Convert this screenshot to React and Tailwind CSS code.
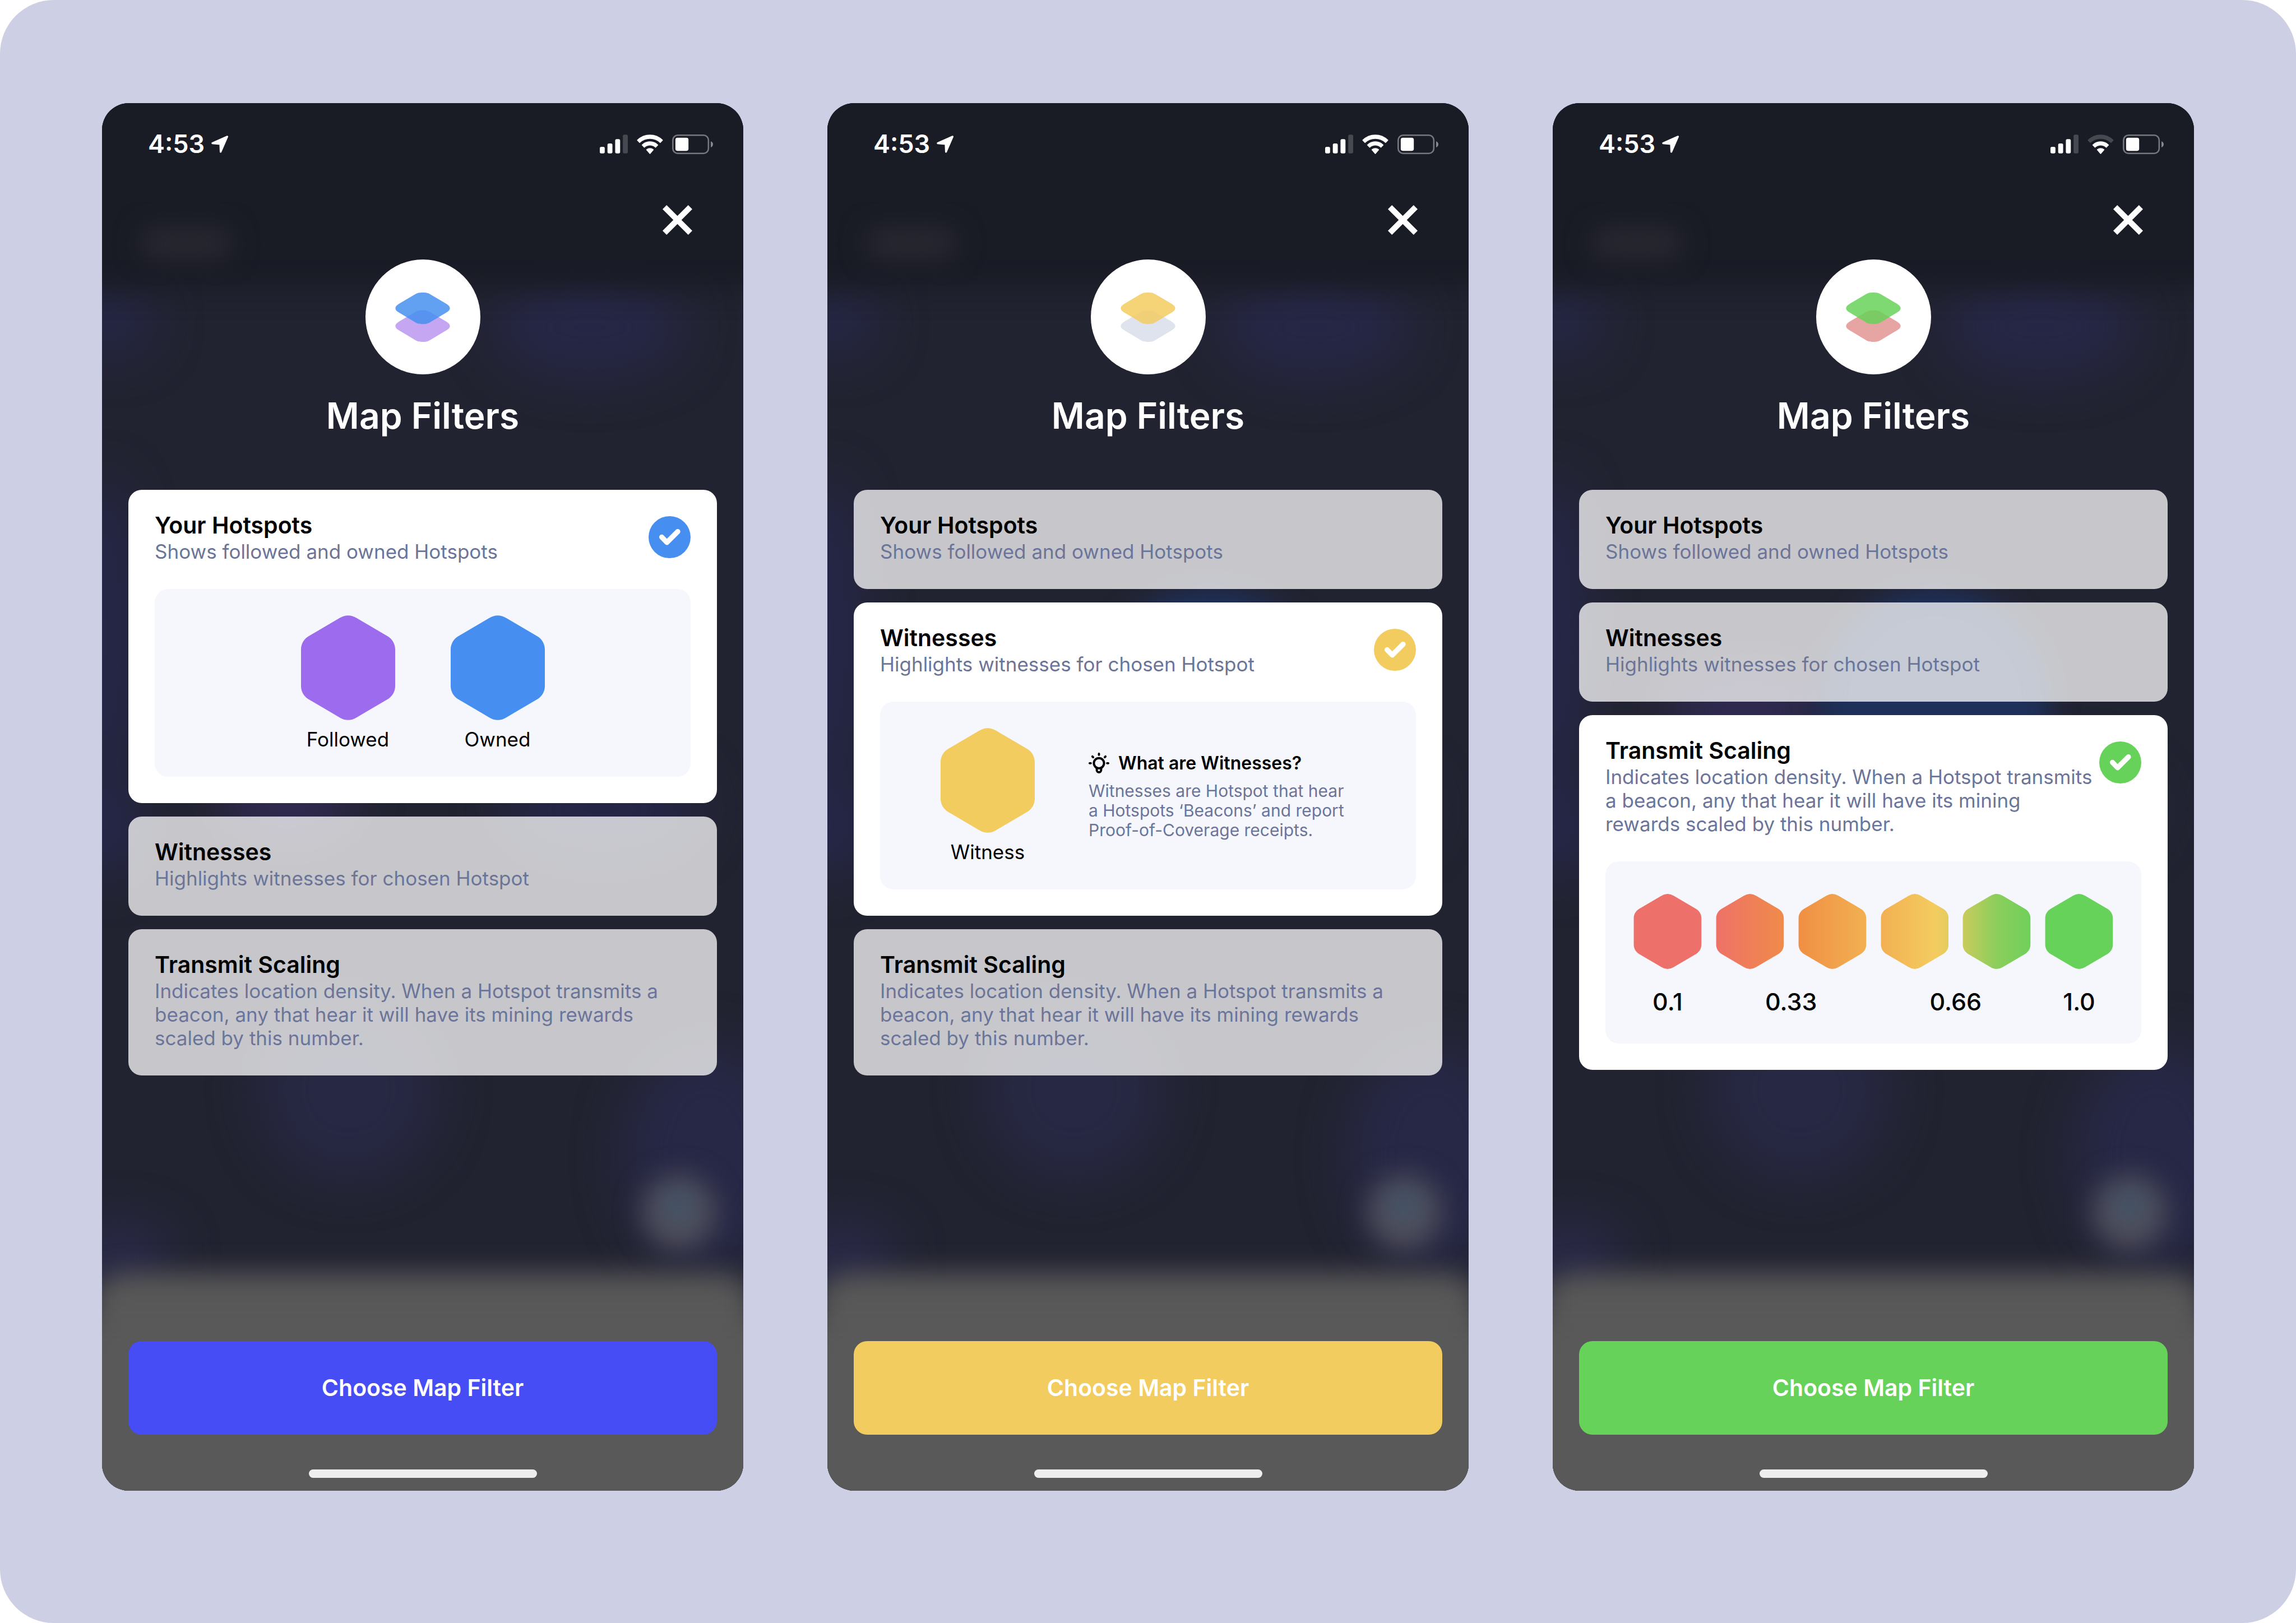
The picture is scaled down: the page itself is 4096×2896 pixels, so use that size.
import { useId } from "react";

const HEX_PATH =
  "M70 5Q86 -5 102 5L159 38.5C167 43.5 172 52.5 172 62V129C172 138.5 167 147.5 159 152.5L102 186Q86 196 70 186L13 152.5C5 147.5 0 138.5 0 129V62C0 52.5 5 43.5 13 38.5Z";

const DIAMOND_PATH =
  "M109 9C122 2 132 0 150 0S178 2 191 9L281 62C306 77 306 96 281 109L191 163C178 171 168 173 150 173S122 171 109 163L19 109C-6 96 -6 77 19 62Z";

const OPTIONS = [
  { id: "hotspots", title: "Your Hotspots", text: "Shows followed and owned Hotspots" },
  { id: "witnesses", title: "Witnesses", text: "Highlights witnesses for chosen Hotspot" },
  {
    id: "scaling",
    title: "Transmit Scaling",
    text: "Indicates location density. When a Hotspot transmits a beacon, any that hear it will have its mining rewards scaled by this number.",
  },
];

const SCREENS = [
  {
    selected: "hotspots",
    top: "#468ff0",
    bottom: "#c4a6f2",
    check: "#468ff0",
    button: "bg-[#474df5]",
    glow: false,
    weakWifi: false,
  },
  {
    selected: "witnesses",
    top: "#f3cc60",
    bottom: "#dfe3ee",
    check: "#f3cc60",
    button: "bg-[#f3cc60]",
    glow: true,
    weakWifi: false,
  },
  {
    selected: "scaling",
    top: "#67d259",
    bottom: "#e6a4a2",
    check: "#67d259",
    button: "bg-[#67d259]",
    glow: true,
    weakWifi: true,
  },
];

const SCALE = [
  [["0", "#ed716a"], ["1", "#ed716a"]],
  [["0", "#ee7268"], ["1", "#f08b4a"]],
  [["0", "#f08f44"], ["1", "#f2b052"]],
  [["0", "#f2b052"], ["0.8", "#f4cc60"], ["1", "#e3cc5e"]],
  [["0", "#c8cc5c"], ["0.5", "#8cce5c"], ["1", "#6fd05a"]],
  [["0", "#67d259"], ["1", "#67d259"]],
];

function Backdrop({ glow }) {
  const id = useId();
  const soft = `${id}-soft`;
  const wide = `${id}-wide`;
  return (
    <svg
      className="absolute inset-0 h-full w-full"
      viewBox="0 0 1144 2476"
      preserveAspectRatio="none"
      aria-hidden="true"
    >
      <defs>
        <filter id={soft} x="-100%" y="-100%" width="300%" height="300%" colorInterpolationFilters="sRGB">
          <feGaussianBlur stdDeviation="24" />
        </filter>
        <filter id={wide} x="-100%" y="-100%" width="300%" height="300%" colorInterpolationFilters="sRGB">
          <feGaussianBlur stdDeviation="42" />
        </filter>
      </defs>
      <rect width="1144" height="2476" fill="#222331" />
      <g filter={`url(#${wide})`}>
        <ellipse cx="870" cy="400" rx="170" ry="90" fill="#262746" />
        <ellipse cx="10" cy="390" rx="80" ry="60" fill="#252746" />
        <ellipse cx="0" cy="950" rx="60" ry="280" fill="#26274a" />
        <ellipse cx="0" cy="1290" rx="70" ry="90" fill="#26274a" />
        <ellipse cx="330" cy="1230" rx="120" ry="80" fill="#322a52" />
        <ellipse cx="890" cy="1260" rx="180" ry="90" fill="#252646" />
        <ellipse cx="440" cy="1760" rx="160" ry="160" fill="#272843" />
        <ellipse cx="1080" cy="1880" rx="150" ry="200" fill="#272846" />
        <ellipse cx="30" cy="2060" rx="90" ry="60" fill="#2a2a4a" />
        {glow && <ellipse cx="350" cy="1080" rx="150" ry="70" fill="#2f2a50" />}
      </g>
      <rect x="-80" y="-120" width="1304" height="450" fill="#191b25" filter={`url(#${soft})`} />
      <rect x="70" y="225" width="160" height="50" rx="20" fill="#2a2a32" filter={`url(#${soft})`} />
      {glow && <circle cx="682" cy="1070" r="205" fill="#1e3059" filter={`url(#${soft})`} />}
      <circle cx="1029" cy="1979" r="66" fill="#50505c" filter={`url(#${soft})`} />
      <circle cx="1029" cy="1966" r="18" fill="#2a587a" filter={`url(#${soft})`} />
      <rect x="-20" y="2088" width="1184" height="500" rx="60" fill="#595959" filter={`url(#${soft})`} />
      <rect x="-80" y="2180" width="1304" height="400" fill="#595959" filter={`url(#${soft})`} />
    </svg>
  );
}

function StatusBar({ weakWifi }) {
  return (
    <div className="flex items-center justify-between pt-[45px] pr-[54px] pl-[82px] text-white">
      <div className="flex items-center gap-3">
        <span className="text-[45px] leading-14 font-semibold">4:53</span>
        <svg className="h-[31px] w-[30px]" viewBox="0 0 92 94" aria-hidden="true">
          <path
            d="M87 5L6 41L49 45L51 88Z"
            fill="currentColor"
            stroke="currentColor"
            strokeWidth="10"
            strokeLinejoin="round"
          />
        </svg>
      </div>
      <div className="flex items-center gap-4">
        <svg className="h-[34px] w-[50px]" viewBox="0 0 153 102" fill="currentColor" aria-hidden="true">
          <rect y="66" width="27" height="36" rx="8" />
          <rect x="42" y="48" width="27" height="54" rx="8" />
          <rect x="84" y="24" width="27" height="78" rx="8" />
          <rect x="126" width="27" height="102" rx="8" fill="#474950" />
        </svg>
        <svg
          className="h-[35px] w-[47px]"
          viewBox="0 0 146 108"
          fill="currentColor"
          stroke="currentColor"
          strokeWidth="5"
          strokeLinejoin="round"
          aria-hidden="true"
        >
          <path
            d="M4 31A98 98 0 0 1 142 31L130 44A83 83 0 0 0 16 44Z"
            fill={weakWifi ? "#474950" : "currentColor"}
            stroke={weakWifi ? "#474950" : "currentColor"}
          />
          <path d="M30 58A61 61 0 0 1 116 58L104 70A46 46 0 0 0 42 70Z" />
          <path d="M55 84A27 27 0 0 1 91 84L73 105Z" />
        </svg>
        <svg className="h-[35px] w-[73px]" viewBox="0 0 225 108" aria-hidden="true">
          <rect x="4" y="4" width="196" height="100" rx="27" fill="none" stroke="#77787f" strokeWidth="8" />
          <rect x="18" y="18" width="72" height="72" rx="11" fill="white" />
          <path d="M213 37Q225 42 225 54T213 71Z" fill="#8a8b91" />
        </svg>
      </div>
    </div>
  );
}

function Hexagon({ color, stops, className }) {
  const id = useId();
  return (
    <svg className={className} viewBox="0 0 172 191" aria-hidden="true">
      {stops && (
        <linearGradient id={id}>
          {stops.map(([offset, stop]) => (
            <stop key={offset} offset={offset} stopColor={stop} />
          ))}
        </linearGradient>
      )}
      <path d={HEX_PATH} fill={stops ? `url(#${id})` : color} />
    </svg>
  );
}

function Legend({ color, label }) {
  return (
    <div className="flex flex-col items-center gap-[13px]">
      <Hexagon color={color} className="h-[187px] w-[168px]" />
      <span className="text-[35px] leading-[42px] text-black">{label}</span>
    </div>
  );
}

function HotspotDetail() {
  return (
    <div className="flex justify-center gap-[99px] rounded-3xl bg-[#f6f7fc] pt-[47px] pb-[46px]">
      <Legend color="#9d6bed" label="Followed" />
      <Legend color="#468ff0" label="Owned" />
    </div>
  );
}

function BulbIcon() {
  return (
    <svg
      className="size-[37px]"
      viewBox="0 0 114 114"
      fill="none"
      stroke="currentColor"
      strokeWidth="12"
      strokeLinecap="round"
      aria-hidden="true"
    >
      <circle cx="57" cy="58" r="28" />
      <path d="M45 86V96A12 12 0 0 0 69 96V86" />
      <path d="M57 6V12M6 58H12M102 58H108M21 21L25 25M93 21L89 25" />
    </svg>
  );
}

function WitnessDetail() {
  return (
    <div className="flex items-center gap-[96px] rounded-3xl bg-[#f6f7fc] pt-[47px] pr-[114px] pb-[46px] pl-[108px]">
      <Legend color="#f3cc60" label="Witness" />
      <div className="flex flex-1 flex-col gap-3">
        <h4 className="flex items-center gap-4 text-[32px] leading-10 font-semibold text-black">
          <BulbIcon />
          What are Witnesses?
        </h4>
        <p className="text-[30px] leading-[35px] text-[#6b7599]">
          Witnesses are Hotspot that hear a Hotspots ‘Beacons’ and report Proof-of-Coverage receipts.
        </p>
      </div>
    </div>
  );
}

function ScalingDetail() {
  return (
    <div className="flex flex-col gap-8 rounded-3xl bg-[#f6f7fc] px-[50px] pt-[58px] pb-[49px]">
      <div className="grid grid-cols-6 gap-[25px]">
        {SCALE.map((stops, i) => (
          <Hexagon key={i} stops={stops} className="h-[134px] w-full" />
        ))}
      </div>
      <div className="grid grid-cols-6 gap-[25px] text-center text-[43px] leading-[52px] font-medium text-black">
        <span>0.1</span>
        <span className="col-span-2">0.33</span>
        <span className="col-span-2">0.66</span>
        <span>1.0</span>
      </div>
    </div>
  );
}

const DETAILS = { hotspots: HotspotDetail, witnesses: WitnessDetail, scaling: ScalingDetail };

function Option({ option, group, selected, check }) {
  const Detail = DETAILS[option.id];
  return (
    <div className={selected ? "rounded-3xl bg-white px-[47px] pb-[47px]" : "rounded-3xl bg-white/75 px-[47px]"}>
      <label className="relative flex items-start justify-between pt-[39px] pb-[46px]">
        <input type="radio" name={group} defaultChecked={selected} className="sr-only" />
        <span className="flex flex-1 flex-col gap-[2px]">
          <span className="text-[41px] leading-12 font-semibold text-black">{option.title}</span>
          <span className="text-[35px] leading-[42px] text-[#6b7599]">{option.text}</span>
        </span>
        {selected && (
          <svg className="mt-2 size-[75px]" viewBox="0 0 229 229" aria-hidden="true">
            <circle cx="114.5" cy="114.5" r="114.5" fill={check} />
            <path
              d="M72 114L100 143L159 84"
              fill="none"
              stroke="white"
              strokeWidth="28"
              strokeLinecap="round"
              strokeLinejoin="round"
            />
          </svg>
        )}
      </label>
      {selected && <Detail />}
    </div>
  );
}

function Phone({ screen }) {
  const group = useId();
  return (
    <section className="relative flex flex-1 flex-col overflow-hidden rounded-[48px] bg-[#222331]">
      <Backdrop glow={screen.glow} />
      <div className="relative flex flex-1 flex-col">
        <StatusBar weakWifi={screen.weakWifi} />
        <button type="button" aria-label="Close" className="mt-[81px] mr-[91px] self-end">
          <svg className="size-[53px]" viewBox="0 0 162 162" stroke="white" strokeWidth="31" aria-hidden="true">
            <path d="M11 11L151 151M151 11L11 151" />
          </svg>
        </button>
        <div className="mt-11 flex size-[205px] items-center justify-center self-center rounded-full bg-white">
          <svg className="h-[88px] w-[98px]" viewBox="0 0 300 271" aria-hidden="true">
            <path d={DIAMOND_PATH} transform="translate(0 98)" fill={screen.bottom} />
            <path d={DIAMOND_PATH} fill={screen.top} fillOpacity="0.85" />
          </svg>
        </div>
        <h2 className="mt-[35px] text-center text-[64px] leading-[77px] font-semibold text-white">Map Filters</h2>
        <div className="mt-[94px] flex flex-col gap-6 px-[47px]">
          {OPTIONS.map((option) => (
            <Option
              key={option.id}
              option={option}
              group={group}
              selected={option.id === screen.selected}
              check={screen.check}
            />
          ))}
        </div>
        <div className="mt-auto flex flex-col px-[47px] pb-[23px]">
          <button
            type="button"
            className={`${screen.button} h-[167px] rounded-3xl text-[41px] font-semibold text-white`}
          >
            Choose Map Filter
          </button>
          <div className="mt-[62px] h-[15px] w-[407px] self-center rounded-full bg-[#eeeeee]" />
        </div>
      </div>
    </section>
  );
}

export default function App() {
  return (
    <div className="bg-white font-['Inter','Liberation_Sans',sans-serif]">
      <main className="flex min-h-screen gap-[150px] rounded-[96px] bg-[#cdd0e4] px-[182px] pt-[184px] pb-[236px]">
        {SCREENS.map((screen) => (
          <Phone key={screen.selected} screen={screen} />
        ))}
      </main>
    </div>
  );
}
